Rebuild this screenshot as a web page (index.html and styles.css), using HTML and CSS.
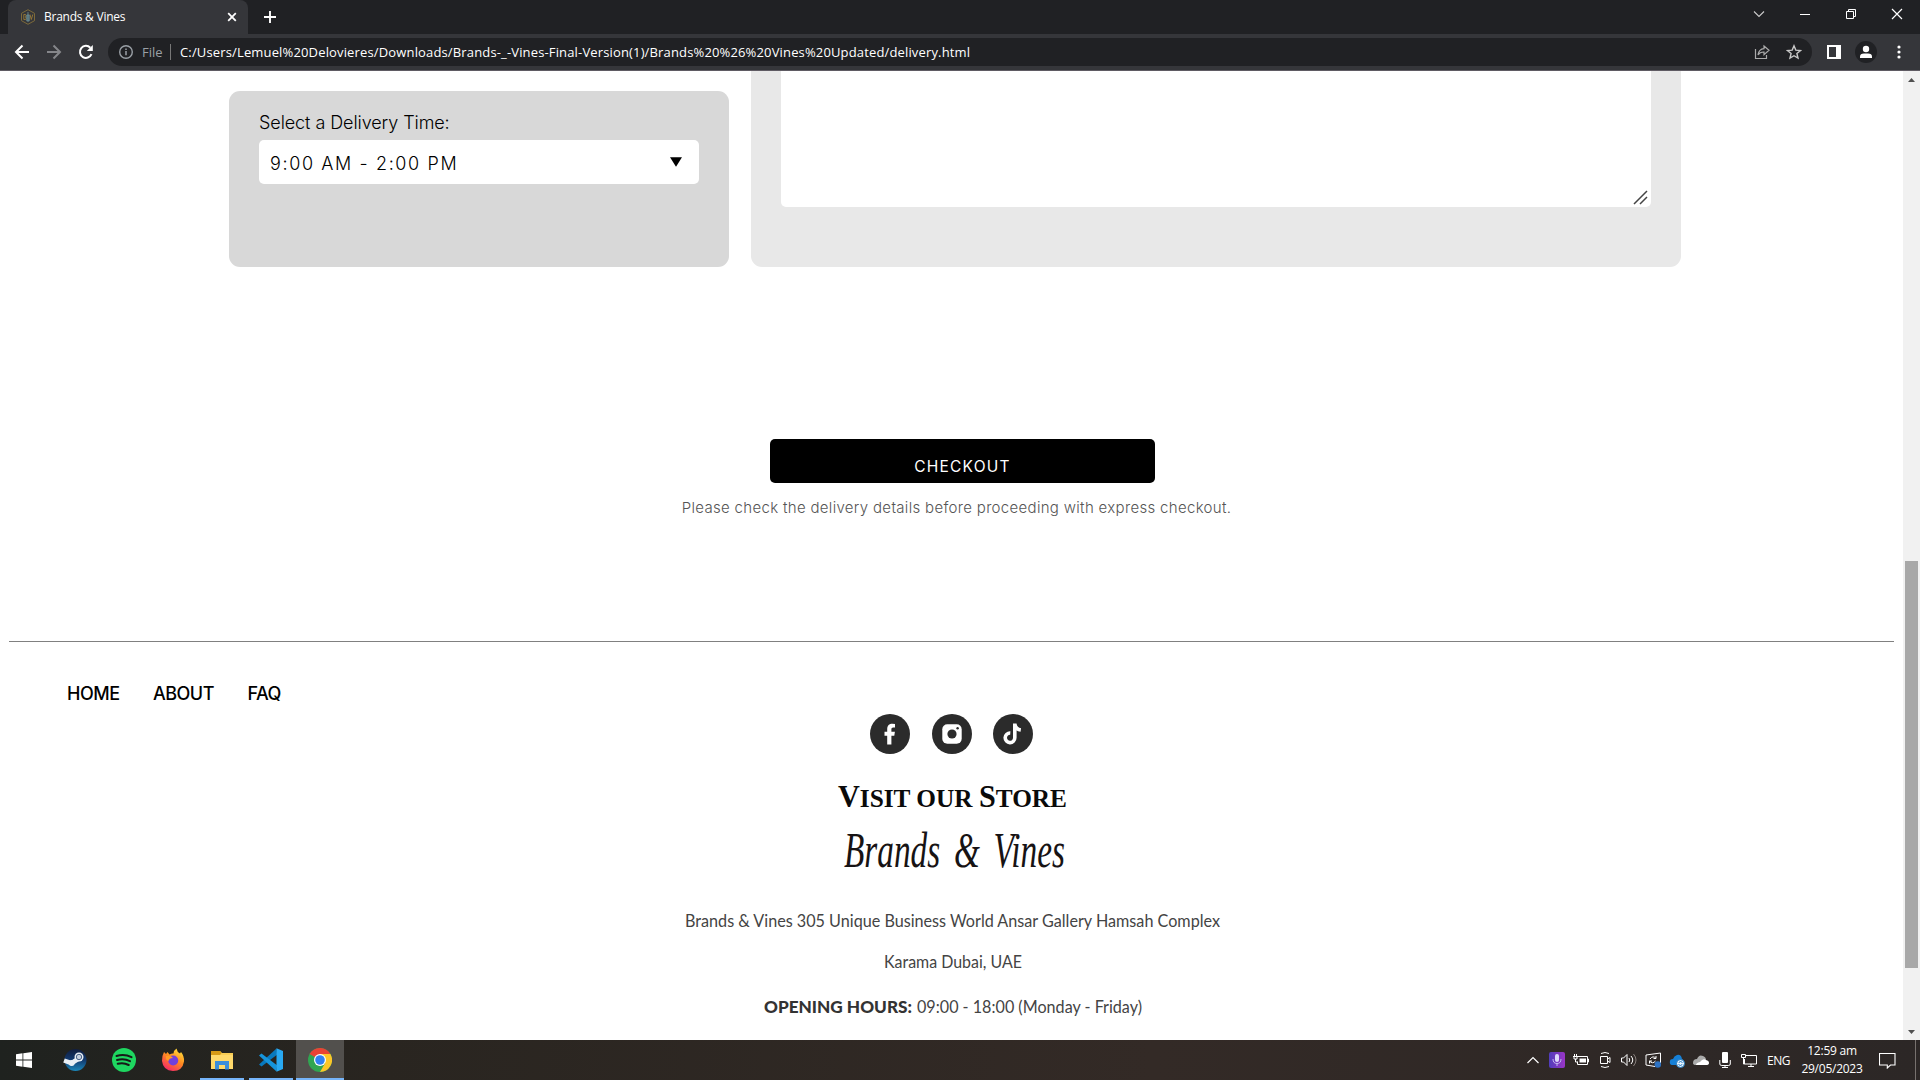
FILE: index.html
```
<!DOCTYPE html>
<html lang="en">
<head>
<meta charset="utf-8">
<title>Brands &amp; Vines</title>
<link rel="stylesheet" href="styles.css">
</head>
<body>
<div class="screen">
  <header class="tabstrip">
    <div class="tab">
      <svg class="favicon" width="16" height="16" viewBox="0 0 16 16"><path d="M8 .7l6.500 3.600v7.400L8 15.300 1.500 11.700V4.300z" fill="none" stroke="#7d6a3a"/><path d="M3.800 5.500v5h1.700q1.500-1.200 0-2.500 1.200-1.300 0-2.500zM10 5.500l1.300 5 1.500-5" fill="none" stroke="#9a7b35" stroke-width=".9"/><path d="M8 3v9.500M6.800 6v6h2.400V6z" stroke="#6d929b" fill="#486068" stroke-width=".8"/></svg>
      <span class="tab-title">Brands &amp; Vines</span>
      <svg width="10" height="10" viewBox="0 0 10 10"><path d="M1.200 1.200l7.600 7.600M8.800 1.200L1.200 8.800" stroke="#fff" stroke-width="1.800"/></svg>
    </div>
    <svg class="newtab" width="14" height="14" viewBox="0 0 14 14"><path d="M7 1v12M1 7h12" stroke="#fff" stroke-width="1.900"/></svg>
    <div class="window-controls">
      <svg width="12" height="12" viewBox="0 0 12 12"><path d="M1 3.500l5 5 5-5" fill="none" stroke="#ccc" stroke-width="1.100"/></svg>
      <svg width="12" height="12" viewBox="0 0 12 12"><path d="M1 6.500h10" stroke="#fff"/></svg>
      <svg width="12" height="12" viewBox="0 0 12 12"><path d="M1.500 3.500h7v7h-7zM3.500 3.500v-2h7v7h-2" fill="none" stroke="#fff"/></svg>
      <svg width="12" height="12" viewBox="0 0 12 12"><path d="M1 1l10 10M11 1L1 11" stroke="#fff" stroke-width="1.200"/></svg>
    </div>
  </header>
  <div class="toolbar">
    <div class="nav-icons">
      <svg width="16" height="16" viewBox="0 0 16 16"><path d="M15 8H2.500M8.500 1.500L2 8l6.500 6.500" fill="none" stroke="#fff" stroke-width="2"/></svg>
      <svg width="16" height="16" viewBox="0 0 16 16"><path d="M1 8h12.500M7.500 1.500L14 8l-6.500 6.500" fill="none" stroke="#85868a" stroke-width="2"/></svg>
      <svg width="16" height="16" viewBox="0 0 16 16"><path d="M13.500 10.200A6 6 0 1 1 12.300 3.700" fill="none" stroke="#fff" stroke-width="2"/><path d="M14.800 1v6h-6z" fill="#fff"/></svg>
    </div>
    <div class="omnibox">
      <svg width="16" height="16" viewBox="0 0 16 16"><circle cx="8" cy="8" r="6.300" fill="none" stroke="#9aa0a6" stroke-width="1.400"/><path d="M8 7v4.300M8 4.500v1.500" stroke="#9aa0a6" stroke-width="1.500"/></svg>
      <span class="scheme">File</span>
      <span class="divider"></span>
      <span class="url">C:/Users/Lemuel%20Delovieres/Downloads/Brands-_-Vines-Final-Version(1)/Brands%20%26%20Vines%20Updated/delivery.html</span>
      <span class="omni-actions">
        <svg width="16" height="16" viewBox="0 0 16 16"><path d="M1.500 5v9.500h11V11" fill="none" stroke="#aaa" stroke-width="1.200"/><path d="M10 2l5 4.300-5 4.300V8Q6 7.800 4 10.800 5 5 10 4.600z" fill="none" stroke="#aaa" stroke-width="1.200"/></svg>
        <svg width="16" height="16" viewBox="0 0 16 16"><path d="M8 1.800l1.800 4.300 4.700.4-3.600 3 1.100 4.600L8 11.700l-4 2.400 1.100-4.600-3.600-3 4.700-.4z" fill="none" stroke="#c8c8c8" stroke-width="1.400"/></svg>
      </span>
    </div>
    <svg class="panel" width="14" height="14" viewBox="0 0 14 14"><path d="M0 0h14v14H0zM2 2v10h7V2z" fill="#fff" fill-rule="evenodd"/></svg>
    <span class="profile"><svg width="14" height="14" viewBox="0 0 14 14"><circle cx="7" cy="4" r="3.200" fill="#fff"/><path d="M1 13v-1.500Q1 8.500 5 8.500h4q4 0 4 3V13z" fill="#fff"/></svg></span>
    <svg class="dots" width="4" height="14" viewBox="0 0 4 14"><g fill="#fff"><circle cx="2" cy="2" r="1.600"/><circle cx="2" cy="7" r="1.600"/><circle cx="2" cy="12" r="1.600"/></g></svg>
  </div>
  <div class="viewport">
    <main class="page">
      <section class="cards">
        <div class="time-card">
          <div class="label">Select a Delivery Time:</div>
          <div class="select"><span>9:00 AM - 2:00 PM</span><svg width="12" height="10" viewBox="0 0 12 10"><path d="M0 .3h12L6 9.700z"/></svg></div>
        </div>
        <div class="notes-card">
          <div class="notes"><svg width="15" height="15" viewBox="0 0 15 15"><path d="M1 14L14 1M7 14L14 7" stroke="#444" stroke-width="1.500"/></svg></div>
        </div>
      </section>
      <section class="checkout">
        <div class="button">CHECKOUT</div>
        <p class="hint">Please check the delivery details before proceeding with express checkout.</p>
      </section>
      <footer class="footer">
        <nav class="links"><a>HOME</a><a>ABOUT</a><a>FAQ</a></nav>
        <div class="social">
          <svg width="40" height="40" viewBox="0 0 40 40"><circle cx="20" cy="20" r="20" fill="#2b2b2b"/><path d="M17.200 30.500V21.800H14.500v-4h2.700v-2.600c0-3.700 2-5.500 5.200-5.500q1.500 0 2.600.2v3.500h-1.700c-1.500 0-1.900.8-1.900 1.900v2.500h3.500l-.6 4h-2.900v8.700z" fill="#fff"/></svg>
          <svg width="40" height="40" viewBox="0 0 40 40"><circle cx="20" cy="20" r="20" fill="#2b2b2b"/><rect x="10.300" y="10.300" width="19.400" height="19.400" rx="5" fill="#fff"/><circle cx="20" cy="20" r="4.600" fill="#2b2b2b"/><circle cx="25.600" cy="14.300" r="1.200" fill="#2b2b2b"/></svg>
          <svg width="40" height="40" viewBox="0 0 40 40"><circle cx="20" cy="20" r="20" fill="#2b2b2b"/><path d="M21.800 9.500v14.300a4.800 4.800 0 1 1-4.500-4.800M21.800 10q.8 5.300 6 6" fill="none" stroke="#fff" stroke-width="3.600"/></svg>
        </div>
        <svg class="store" width="570" height="260" viewBox="0 0 570 260">
          <text class="store-title" x="167" y="27" textLength="229" lengthAdjust="spacingAndGlyphs">V<tspan class="sc">ISIT OUR </tspan>S<tspan class="sc">TORE</tspan></text>
          <text class="store-sign" x="173" y="87" textLength="221" lengthAdjust="spacingAndGlyphs" word-spacing="8">Brands &amp; Vines</text>
          <text class="store-text" x="14" y="147" textLength="535" lengthAdjust="spacingAndGlyphs">Brands &amp; Vines 305 Unique Business World Ansar Gallery Hamsah Complex</text>
          <text class="store-text" x="213" y="188" textLength="138" lengthAdjust="spacingAndGlyphs">Karama Dubai, UAE</text>
          <text class="store-text strong" x="93" y="233" textLength="148" lengthAdjust="spacingAndGlyphs">OPENING HOURS:</text>
          <text class="store-text" x="246" y="233" textLength="225" lengthAdjust="spacingAndGlyphs">09:00 - 18:00 (Monday - Friday)</text>
        </svg>
      </footer>
    </main>
    <div class="scrollbar">
      <svg width="7" height="4" viewBox="0 0 7 4"><path d="M0 4l3.500-4L7 4z" fill="#505050"/></svg>
      <div class="thumb"></div>
      <svg class="down" width="7" height="4" viewBox="0 0 7 4"><path d="M0 0l3.500 4L7 0z" fill="#505050"/></svg>
    </div>
  </div>
  <footer class="taskbar">
    <div class="app start"><svg width="16" height="16" viewBox="0 0 16 16"><path d="M0 2.200L6.500 1.300V7.600H0zM7.300 1.200L16 0v7.600H7.300zM0 8.400h6.500v6.300L0 13.800zM7.300 8.400H16V16l-8.700-1.200z" fill="#fff"/></svg></div>
    <div class="app"><svg width="24" height="24" viewBox="0 0 24 24"><defs><linearGradient id="steam" x1="0" y1="0" x2="0" y2="1"><stop offset="0" stop-color="#111d3d"/><stop offset=".5" stop-color="#123a70"/><stop offset="1" stop-color="#1b87b9"/></linearGradient></defs><circle cx="12.500" cy="12" r="11" fill="url(#steam)"/><path d="M1 12.500l7.500 2.700 6.500-4.200" stroke="#e8eef4" stroke-width="4.500" fill="none"/><circle cx="16" cy="9" r="4.500" fill="#e8eef4"/><circle cx="16" cy="9" r="2.700" fill="#c5d0de" stroke="#4b648a"/><circle cx="8.700" cy="15" r="3" fill="#e8eef4"/></svg></div>
    <div class="app"><svg width="24" height="24" viewBox="0 0 24 24"><circle cx="12" cy="12" r="12" fill="#1ed760"/><path d="M4.500 8q8-2.400 15 1.200M5 12q7-2 13 1.200M5.700 15.800q6-1.500 11 1.200" fill="none" stroke="#171a18" stroke-width="2" stroke-linecap="round"/></svg></div>
    <div class="app"><svg width="24" height="24" viewBox="0 0 24 24"><defs><linearGradient id="fox" x1=".8" y1="0" x2=".2" y2="1"><stop offset="0" stop-color="#ffe43d"/><stop offset=".45" stop-color="#ff8b20"/><stop offset="1" stop-color="#f5216d"/></linearGradient></defs><path d="M3 4l2 2 1.500-2 2 2.500Q11 5 12.500 5.500 13 2 15.500.5 16 4 19 5.500L20 4q3.500 4.200 3 9.500Q21.500 23 12 23 2 22.500 1 13 .8 8 3 4z" fill="url(#fox)"/><circle cx="12.200" cy="12.500" r="5" fill="#7140dc"/><path d="M5 8q5-1 7 2-4 0-4.500 3Q4 12 5 8z" fill="#ff9b24"/></svg></div>
    <div class="app open"><svg width="22" height="20" viewBox="0 0 22 20"><path d="M0 1h9l2 2h11v16H0z" fill="#f8cd55"/><path d="M0 1h9l1.500 2L9 5H0z" fill="#d79a16"/><path d="M0 5h22v14H0z" fill="#ffd96b"/><path d="M4 19.500V11h14v8.500h-4V15H8v4.500z" fill="#3a8edb"/></svg></div>
    <div class="app open"><svg width="24" height="24" viewBox="0 0 24 24"><path d="M17.500.5L0 16.500l2.500 2L18 6.800z" fill="#0879be"/><path d="M0 7.500l2.500-2L18 17.200l-.5 6.300z" fill="#1594dc"/><path d="M17.500.2L24 3v18l-6.500 2.800z" fill="#29a9f2"/></svg></div>
    <div class="app open active"><svg width="24" height="24" viewBox="0 0 24 24"><circle cx="12" cy="12" r="12" fill="#30a552"/><path d="M12 12L1.600 6A12 12 0 0 1 22.400 6H12z" fill="#e94235"/><path d="M12 6h10.400A12 12 0 0 1 12 24l5.200-9z" fill="#fcc629"/><circle cx="12" cy="12" r="6" fill="#fff"/><circle cx="12" cy="12" r="4.800" fill="#3080f3"/></svg></div>
    <div class="tray">
      <svg class="slim" width="12" height="16" viewBox="0 0 12 16"><path d="M.5 11L6 5.500l5.500 5.500" fill="none" stroke="#fff" stroke-width="1.200"/></svg>
      <svg width="16" height="16" viewBox="0 0 16 16"><defs><linearGradient id="voice"><stop stop-color="#503dbb"/><stop offset="1" stop-color="#9a35c6"/></linearGradient></defs><rect width="16" height="16" rx="2" fill="url(#voice)"/><rect x="6" y="2" width="4" height="8" rx="2" fill="#ddd8fc"/><path d="M4 7q0 4.500 4 4.500T12 7M8 11v3" fill="none" stroke="#c1b6ef"/></svg>
      <svg width="16" height="16" viewBox="0 0 16 16"><path d="M5 4.500h9.500v8H4.500V9.500M14.500 7h1v3h-1M1.500 2v2M3.500 2v2M0 4.500h5M1 5v2h3V5M2.500 7v3h2" fill="none" stroke="#fff"/><path d="M6.500 6.500h6.500v4H6.500z" fill="#fff"/></svg>
      <svg class="slim" width="12" height="16" viewBox="0 0 12 16"><path d="M2 1.500q4-2 8 0M2 14.500q4 2 8 0M1.500 4.500h7v7h-7zM8.500 7l2.500-1.500v5L8.500 9" fill="none" stroke="#fff"/></svg>
      <svg width="16" height="16" viewBox="0 0 16 16"><path d="M.5 6v4h2l3.500 3.500v-11L2.500 6zM8 6q1.500 2 0 4M10 4q3.500 4 0 8" fill="none" stroke="#fff"/><path d="M12.500 2q5 6 0 12" fill="none" stroke="#877f7c"/></svg>
      <svg width="16" height="16" viewBox="0 0 16 16"><path d="M10 14.500L1 13V3l14.500-2v10" fill="none" stroke="#fff"/><path d="M5 7q3-4 6-.5M11 4v2.500H8.500M10.500 9q-3 3.500-6 0M4.500 11.500V9H7" fill="none" stroke="#fff"/><circle cx="12.800" cy="12.500" r="3.200" fill="#2e73c4"/></svg>
      <svg width="16" height="16" viewBox="0 0 16 16"><path d="M1 9q-1 4 3 4h10q3-4-1-6Q12 2 8 3 5 4 4 7 1 7 1 9z" fill="#1680d7"/><circle cx="11.500" cy="11.500" r="4" fill="#e8f4ff" stroke="#1c75bb"/><path d="M9.700 10.500q2-2 3.800 0M13.300 12.500q-2 2-3.800 0" fill="none" stroke="#1b75c1"/></svg>
      <svg width="16" height="16" viewBox="0 0 16 16"><path d="M0 11q0-4 4-4 2-5 6-3 3 1 3 4l-7 5H3q-3 0-3-2z" fill="#aaa"/><path d="M3 13q0-2 4-3 3-4 6-2 3 .5 3 3 0 2-3 2z" fill="#fff"/></svg>
      <svg class="slim" width="12" height="16" viewBox="0 0 12 16"><rect x="3" y="0" width="6" height="11" rx="1" fill="#fff"/><path d="M.8 8v4q0 1.500 2 1.500h6.500q2 0 2-1.500V8M6 13.500v2M3 15.500h6" fill="none" stroke="#fff"/></svg>
      <svg width="16" height="16" viewBox="0 0 16 16"><path d="M5 3.500h10.500v8.500H3.500V7M7 14.500h6M10 12v2.500M.5 2.500h4v3h-4zM2.500 5.500V12h1" fill="none" stroke="#fff"/></svg>
      <span class="lang">ENG</span>
      <span class="clock"><span>12:59 am</span><span>29/05/2023</span></span>
      <svg class="action" width="17" height="17" viewBox="0 0 17 17"><path d="M.5 1.500h15.500v11.500h-4.500L8.300 16v-3H.5z" fill="none" stroke="#fff" stroke-width="1.100"/></svg>
      <span class="peek"></span>
    </div>
  </footer>
</div>
</body>
</html>
```
FILE: styles.css
```
* { box-sizing: border-box; }
body { margin: 0; font-family: Inter, sans-serif; color: #000; }
svg { display: block; flex: none; }
.screen { width: 1920px; height: 1080px; overflow: hidden; display: flex; flex-direction: column; background: #fff; }

.tabstrip { height: 34px; background: #202124; display: flex; padding-left: 8px; }
.tab { width: 240px; background: #35363a; border-radius: 8px 8px 0 0; display: flex; align-items: center; padding: 0 11px 0 12px; font: 12px "Open Sans", sans-serif; color: #fff; }
.tab-title { flex: 1; margin: -1px 0 0 8px; letter-spacing: -.25px; }
.newtab { margin: 10px 0 0 15px; }
.window-controls { margin: 8px 17px 0 auto; display: flex; gap: 34px; }

.toolbar { height: 37px; background: #35363a; border-bottom: 1px solid #5f5b63; display: flex; align-items: center; padding: 0 19px 0 14px; }
.nav-icons { display: flex; gap: 16px; }
.omnibox { margin-left: 14px; width: 1704px; height: 28px; border-radius: 14px; background: #202124; display: flex; align-items: center; padding: 0 10px; font: 13px "Open Sans", sans-serif; color: #fff; }
.scheme { color: #9aa0a6; margin-left: 8px; width: 28px; }
.divider { width: 1px; height: 16px; background: #777; }
.url { margin-left: 9px; letter-spacing: .15px; white-space: nowrap; }
.omni-actions { margin-left: auto; display: flex; gap: 16px; }
.panel { margin-left: 15px; }
.profile { width: 22px; height: 22px; border-radius: 50%; background: #202124; margin-left: 14px; display: flex; align-items: center; justify-content: center; }
.dots { margin-left: auto; }

.viewport { height: 969px; display: flex; }
.page { width: 1903px; background: #fff; overflow: hidden; }
.scrollbar { width: 17px; background: #f1f1f1; display: flex; flex-direction: column; align-items: center; padding: 7px 0 6px; }
.thumb { width: 13px; height: 407px; margin-top: 479px; background: #a8a8a8; }
.down { margin-top: auto; }

.cards { display: flex; gap: 22px; padding-left: 229px; height: 196px; }
.time-card { width: 500px; height: 176px; margin-top: 20px; background: #d8d8d8; border-radius: 11px; padding: 20px 30px; }
.label { font-size: 18px; font-weight: 300; line-height: 24px; height: 29px; letter-spacing: -.08px; }
.select { height: 44px; background: #fff; border-radius: 5px; display: flex; align-items: center; justify-content: space-between; padding: 2px 17px 0 11px; font-size: 18px; font-weight: 300; letter-spacing: 1.620px; }
.select svg { margin-top: -2px; }
.notes-card { width: 930px; background: #e8e8e8; border-radius: 0 0 11px 11px; padding: 0 30px; }
.notes { height: 136px; background: #fff; border-radius: 0 0 5px 5px; display: flex; justify-content: flex-end; align-items: flex-end; padding: 2px 3px; }

.checkout { height: 374px; padding-top: 172px; display: flex; flex-direction: column; align-items: center; }
.button { width: 385px; height: 44px; margin-left: 22px; background: #000; border-radius: 5px; color: #fff; text-align: center; font-size: 15.500px; line-height: 56px; letter-spacing: 1.200px; }
.hint { margin: 13px 0 0 10px; font-size: 15px; font-weight: 300; line-height: 24px; letter-spacing: .32px; color: #555; white-space: nowrap; }

.footer { margin: 0 9px; border-top: 1px solid #808080; display: flex; flex-direction: column; align-items: center; }
.links { align-self: flex-start; display: flex; gap: 33.500px; padding: 40px 0 0 58px; font-size: 18px; font-weight: 500; line-height: 24px; height: 72px; letter-spacing: -.5px; }
.social { display: flex; gap: 21.500px; }
.store { margin: 26px 0 0 8px; overflow: visible; }
.store-title { font: bold 31px "Liberation Serif", serif; fill: #0a0a0a; }
.sc { font-size: 26px; }
.store-sign { font: italic 50px "Liberation Serif", serif; fill: #171314; }
.store-text { font: 17px Lato, sans-serif; fill: #444; }
.strong { font-weight: 900; fill: #333; }

.taskbar { height: 40px; background: linear-gradient(90deg, #1f221f, #292520 20%, #332a26 60%, #2c2726); display: flex; }
.app { width: 48px; margin-right: 1px; display: flex; align-items: center; justify-content: center; }
.start { margin-right: 3px; }
.open { border-bottom: 2px solid #76b9ff; border-image: linear-gradient(90deg, transparent 4px, #76b5fa 4px, #76b5fa 44px, transparent 44px) 2; padding-top: 2px; }
.active { background: #52504d; border-image: none; border-bottom-color: #76b5fa; }
.tray { margin-left: auto; display: flex; align-items: center; gap: 8px; color: #fff; font: 12px "Open Sans", sans-serif; }
.slim { margin: 0 2px; }
.lang { letter-spacing: -.5px; width: 23px; margin-left: 2px; }
.clock { width: 62px; margin-left: 3px; display: flex; flex-direction: column; align-items: center; line-height: 18px; letter-spacing: -.25px; }
.action { margin-left: 8px; }
.peek { width: 1px; height: 40px; background: #77716e; margin: 0 4px 0 11px; }
```
